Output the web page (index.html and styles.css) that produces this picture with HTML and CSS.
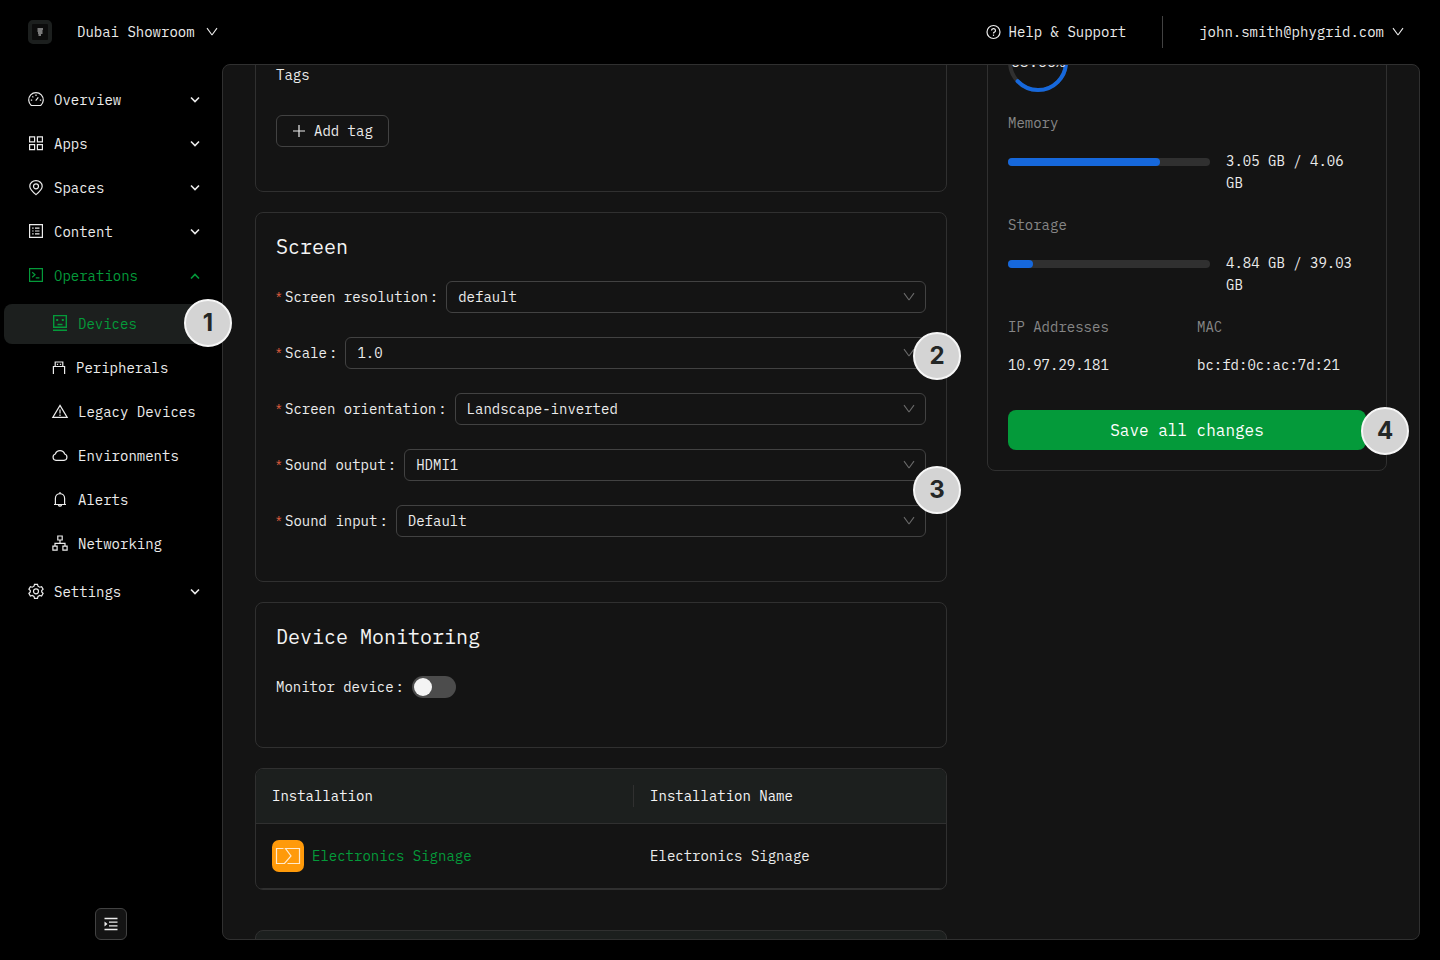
FILE: index.html
```html
<!DOCTYPE html>
<html lang="en">
<head>
  <meta charset="UTF-8" />
  <meta name="viewport" content="width=device-width, initial-scale=1.0"/>
  <title>Devices</title>
  <link rel="stylesheet" href="styles.css">
</head>
<body>
  <svg class="defs" aria-hidden="true">
    <symbol id="down" viewBox="0 0 12 12"><path d="M1 2.2 6 9 11 2.2" fill="none" stroke="currentColor" stroke-width="1.1" stroke-linejoin="bevel"/></symbol>
    <symbol id="caret" viewBox="0 0 12 12"><path d="M2 3.5 6 7.5 10 3.5" fill="none" stroke="currentColor" stroke-width="1.6"/></symbol>
  </svg>

  <header class="topbar">
    <span class="logo">
      <svg width="16" height="16" viewBox="0 0 16 16"><path d="M5.500 5h5.500M5.500 7h5M6 9h4.500M6.500 11h2.500" stroke="#e8e8e8" stroke-width="1.100"/></svg>
    </span>
    <button class="link-button tenant">Dubai Showroom <svg class="down"><use href="#down"/></svg></button>
    <a class="help" href="#">
      <svg width="16" height="16" viewBox="0 0 16 16" fill="none" stroke="currentColor" stroke-width="1.2"><circle cx="8.500" cy="8" r="6.500"/><path d="M6.500 6.600a2 1.900 0 1 1 2.600 1.800q-.6.3-.6 1v.2"/><path d="M8.500 10.600v1.300"/></svg>
      Help &amp; Support
    </a>
    <span class="divider"></span>
    <button class="link-button user">john.smith@phygrid.com <svg class="down"><use href="#down"/></svg></button>
  </header>

  <div class="layout">
    <aside class="sidebar">
      <nav class="menu">
        <a class="item" href="#">
          <svg class="icon" viewBox="0 0 16 16"><path d="M3.300 13.500a7.300 7.300 0 1 1 9.400 0z"/><path d="M7.700 8.700 10.300 5.400M8 2.500v1.400M4.400 4.400l.9.9M2.800 8.100h1.400M11.800 8.100h1.400"/></svg>
          Overview <svg class="caret"><use href="#caret"/></svg>
        </a>
        <a class="item" href="#">
          <svg class="icon" viewBox="0 0 16 16"><path d="M1.600.9h5v5h-5zM9.400.9h5v5h-5zM1.600 8.700h5v5h-5zM9.400 8.700h5v5h-5z"/></svg>
          Apps <svg class="caret"><use href="#caret"/></svg>
        </a>
        <a class="item" href="#">
          <svg class="icon" viewBox="0 0 16 16"><path d="M8 14.600C4.600 11.800 1.800 9.300 1.800 6.200a6.200 5.600 0 0 1 12.400 0c0 3.100-2.800 5.600-6.200 8.400z"/><circle cx="8" cy="6.300" r="2.500"/></svg>
          Spaces <svg class="caret"><use href="#caret"/></svg>
        </a>
        <a class="item" href="#">
          <svg class="icon" viewBox="0 0 16 16"><path d="M1.600.6h12.800v12.800H1.600zM4.200 4.200h1.400M4.200 7h1.400M4.200 9.800h1.400M7 4.200h4.500M7 7h4.500M7 9.800h4.500"/></svg>
          Content <svg class="caret"><use href="#caret"/></svg>
        </a>
        <a class="item active" href="#">
          <svg class="icon" viewBox="0 0 16 16"><path d="M1.600.6h12.800v12.800H1.600zM4.200 4.200 7 6.700 4.200 9.200M7.800 9.800h3.600"/></svg>
          Operations <svg class="caret open"><use href="#caret"/></svg>
        </a>
        <div class="submenu">
          <a class="item selected" href="#">
            <svg class="icon" viewBox="0 0 16 16"><path d="M1.700-.4h12.600v11.600H1.700zM1 14.300h14M5.500 8.500h5" stroke-width="1.400"/><path d="M4.200 4h2M9.800 4h2" stroke-width="2"/></svg>
            Devices
            <span class="marker marker-devices">1</span>
          </a>
          <a class="item" href="#">
            <svg class="icon narrow" viewBox="0 0 14 16"><path d="M3.200 6V2h7.600v4M1.400 14V6.500h11.200V14M5.500 3.800v1.200M8.500 3.800v1.200"/></svg>
            Peripherals
          </a>
          <a class="item" href="#">
            <svg class="icon" viewBox="0 0 16 16"><path d="M8 1.400 15.200 13.400H.8zM8 5.500v4M8 10.600v1.400"/></svg>
            Legacy Devices
          </a>
          <a class="item" href="#">
            <svg class="icon" viewBox="0 0 16 16"><path d="M4 12.400a3.300 3.300 0 0 1-.7-6.400 5 5 0 0 1 9.400 0 3.300 3.300 0 0 1-.7 6.400z"/></svg>
            Environments
          </a>
          <a class="item" href="#">
            <svg class="icon" viewBox="0 0 16 16"><path d="M2 12.500h12M3.400 12.500V6.300a4.600 4.600 0 0 1 9.200 0v6.200M8 0v1.700M6.400 13a1.700 1.700 0 0 0 3.200 0"/></svg>
            Alerts
          </a>
          <a class="item" href="#">
            <svg class="icon" viewBox="0 0 16 16"><path d="M5.800 0h4.400v4H5.800zM.9 10.200h4.200v4H.9zM10.900 10.200h4.200v4h-4.200zM8 4v3.300M3 10.200V7.300h10v2.900"/></svg>
            Networking
          </a>
        </div>
        <a class="item" href="#">
          <svg class="icon" viewBox="0 0 16 16"><path d="M6.500.300h3l.5 1.900 1.700 1 1.900-.6 1.500 2.600-1.400 1.400v1.400l1.400 1.400-1.500 2.600-1.900-.6-1.700 1-.5 1.900h-3L6 12.400l-1.700-1-1.900.6L.9 9.400l1.400-1.400V6.600L.9 5.200l1.500-2.600 1.900.6 1.700-1z"/><circle cx="8" cy="7.300" r="2.500"/></svg>
          Settings <svg class="caret"><use href="#caret"/></svg>
        </a>
      </nav>
      <button class="collapse" aria-label="Toggle menu">
        <svg width="14" height="14" viewBox="0 0 14 14"><path d="M.5 1.500h13M5 5.200h8.500M5 8.800h8.500M.5 12.500h13" stroke="currentColor" stroke-width="1.300"/><path d="M.5 4.500 3.500 7l-3 2.500z" fill="currentColor"/></svg>
      </button>
    </aside>

    <main class="panel">
      <div class="details">
        <section class="card">
          <div class="field-label">Tags</div>
          <button class="add-tag">
            <svg width="14" height="14" viewBox="0 0 14 14"><path d="M7 1v12M1 7h12" stroke="currentColor" stroke-width="1.2"/></svg>
            Add tag
          </button>
        </section>

        <section class="card">
          <h2>Screen</h2>
          <div class="row">
            <label class="required" for="resolution">Screen resolution</label>
            <div class="select"><select id="resolution"><option>default</option></select><svg class="down"><use href="#down"/></svg></div>
          </div>
          <div class="row">
            <label class="required" for="scale">Scale</label>
            <div class="select"><select id="scale"><option>1.0</option></select><svg class="down"><use href="#down"/></svg></div>
            <span class="marker marker-scale">2</span>
          </div>
          <div class="row">
            <label class="required" for="orientation">Screen orientation</label>
            <div class="select"><select id="orientation"><option>Landscape-inverted</option></select><svg class="down"><use href="#down"/></svg></div>
          </div>
          <div class="row">
            <label class="required" for="output">Sound output</label>
            <div class="select"><select id="output"><option>HDMI1</option></select><svg class="down"><use href="#down"/></svg></div>
            <span class="marker marker-sound">3</span>
          </div>
          <div class="row">
            <label class="required" for="input">Sound input</label>
            <div class="select"><select id="input"><option>Default</option></select><svg class="down"><use href="#down"/></svg></div>
          </div>
        </section>

        <section class="card">
          <h2>Device Monitoring</h2>
          <div class="row">
            <label for="monitor">Monitor device</label>
            <input class="switch" type="checkbox" id="monitor">
          </div>
        </section>

        <div class="card table-card">
          <table>
            <thead>
              <tr><th><span>Installation</span></th><th>Installation Name</th></tr>
            </thead>
            <tbody>
              <tr>
                <td>
                  <a class="app" href="#">
                    <svg width="32" height="32" viewBox="0 0 32 32"><rect width="32" height="32" rx="7" fill="#ff9a0a"/><path d="M11.500 8.500h-7v15h8L19 16l-5.500-7.500h14v15H15.500" fill="none" stroke="#ffe9cc" stroke-width="1.200"/></svg>
                    Electronics Signage
                  </a>
                </td>
                <td>Electronics Signage</td>
              </tr>
            </tbody>
          </table>
        </div>

        <div class="card next-card"></div>
      </div>

      <aside class="card status">
        <div class="ring">
          <svg width="60" height="60" viewBox="0 0 60 60" fill="none" stroke-width="4"><circle cx="30" cy="30" r="28" stroke="#303030"/><circle cx="30" cy="30" r="28" stroke="#1668dc" stroke-linecap="round" pathLength="100" stroke-dasharray="63 100" transform="rotate(-90 30 30)"/></svg>
          <span>63.66%</span>
        </div>
        <div class="stat">
          <div class="stat-label">Memory</div>
          <div class="usage"><div class="bar"><div class="fill" style="width: 75%"></div></div><span>3.05 GB / 4.06 GB</span></div>
        </div>
        <div class="stat">
          <div class="stat-label">Storage</div>
          <div class="usage"><div class="bar"><div class="fill" style="width: 12.4%"></div></div><span>4.84 GB / 39.03 GB</span></div>
        </div>
        <div class="addresses">
          <div><div class="stat-label">IP Addresses</div>10.97.29.181</div>
          <div><div class="stat-label">MAC</div>bc:fd:0c:ac:7d:21</div>
        </div>
        <div class="save-wrap">
          <button class="save">Save all changes</button>
          <span class="marker marker-save">4</span>
        </div>
      </aside>
    </main>
  </div>
</body>
</html>
```

FILE: styles.css
```css
* {
  box-sizing: border-box;
}
body {
  margin: 0;
  height: 100vh;
  display: flex;
  flex-direction: column;
  overflow: hidden;
  background: #000;
  color: #ececec;
  font-family: "IBM Plex Mono", "Liberation Mono", monospace;
  font-size: 14px;
  line-height: 22px;
}
button, select {
  font: inherit;
  color: inherit;
}
button {
  cursor: pointer;
}
a {
  color: inherit;
  text-decoration: none;
}
.defs {
  display: none;
}
.down, .caret {
  width: 12px;
  height: 12px;
  flex: none;
}

/* top bar */
.topbar {
  height: 64px;
  flex: none;
  display: flex;
  align-items: center;
  padding: 0 36px 0 28px;
}
.logo {
  width: 24px;
  height: 24px;
  display: flex;
  align-items: center;
  justify-content: center;
  background: #0c0c0c;
  border: 4px solid #1c1f1e;
  border-radius: 5px;
}
.link-button {
  display: flex;
  align-items: center;
  gap: 8px;
  padding: 0;
  border: none;
  background: none;
}
.tenant {
  gap: 11px;
  margin-left: 25px;
}
.help {
  display: flex;
  align-items: center;
  gap: 8px;
  margin-left: auto;
}
.divider {
  width: 1px;
  height: 32px;
  margin: 0 36px;
  background: #424242;
}

.layout {
  flex: 1;
  min-height: 0;
  display: flex;
  padding: 0 20px 20px 0;
}

/* sidebar */
.sidebar {
  width: 222px;
  flex: none;
  display: flex;
  flex-direction: column;
  justify-content: space-between;
  align-items: center;
}
.menu {
  width: 100%;
  display: flex;
  flex-direction: column;
  gap: 4px;
  padding: 16px 4px 0;
}
.item {
  position: relative;
  height: 40px;
  display: flex;
  align-items: center;
  gap: 10px;
  padding: 0 16px 0 24px;
  border-radius: 8px;
  white-space: nowrap;
}
.icon {
  width: 16px;
  height: 16px;
  flex: none;
  fill: none;
  stroke: currentColor;
  stroke-width: 1.2;
  overflow: visible;
}
.icon.narrow {
  width: 14px;
}
.caret {
  margin-left: auto;
  margin-right: 1px;
}
.caret.open {
  transform: rotate(180deg);
}
.submenu {
  display: flex;
  flex-direction: column;
  gap: 4px;
  padding: 4px 0;
}
.submenu .item {
  padding-left: 48px;
}
.active, .selected {
  color: #049a3a;
}
.selected {
  background: #1c1f1e;
}
.collapse {
  width: 32px;
  height: 32px;
  display: flex;
  align-items: center;
  justify-content: center;
  padding: 0;
  background: #141414;
  border: 1px solid #424242;
  border-radius: 6px;
}

/* content */
.panel {
  flex: 1;
  min-width: 0;
  display: grid;
  grid-template-columns: 692fr 400fr;
  gap: 40px;
  align-items: start;
  padding: 0 32px;
  overflow: hidden;
  background: #141414;
  border: 1px solid #303030;
  border-radius: 8px;
}
.details {
  display: flex;
  flex-direction: column;
  gap: 20px;
  margin-top: -27px;
}
.card {
  padding: 20px;
  border: 1px solid #303030;
  border-radius: 8px;
}
h2 {
  margin: 0 0 20px;
  font-size: 20px;
  font-weight: 400;
  line-height: 28px;
  color: #f4f4f4;
}
.field-label {
  line-height: 32px;
  margin-bottom: 24px;
}
.add-tag {
  height: 32px;
  display: flex;
  align-items: center;
  gap: 8px;
  margin-bottom: 24px;
  padding: 0 15px;
  background: #141414;
  border: 1px solid #424242;
  border-radius: 6px;
}
.row {
  position: relative;
  display: flex;
  align-items: center;
  height: 32px;
  margin-bottom: 24px;
}
.row label {
  display: flex;
  align-items: center;
}
.row label::after {
  content: ":";
  margin: 0 8px 0 2px;
}
.required::before {
  content: "*";
  width: 5px;
  margin-right: 4px;
  color: #dc5a3c;
  font-family: "Liberation Sans", sans-serif;
}
.select {
  position: relative;
  flex: 1;
}
.select select {
  display: block;
  width: 100%;
  height: 32px;
  padding: 0 30px 0 11px;
  appearance: none;
  background: #141414;
  border: 1px solid #424242;
  border-radius: 6px;
}
.select .down {
  position: absolute;
  top: 10px;
  right: 11px;
  color: #6a6a6a;
  pointer-events: none;
}
.switch {
  appearance: none;
  width: 44px;
  height: 22px;
  margin: 0;
  padding: 2px;
  background: #4c4c4c;
  border-radius: 11px;
}
.switch::before {
  content: "";
  display: block;
  width: 18px;
  height: 18px;
  border-radius: 50%;
  background: #f4f4f4;
}

/* installations */
.table-card {
  padding: 0;
  overflow: hidden;
}
table {
  width: 100%;
  border-collapse: separate;
  border-spacing: 0;
  table-layout: fixed;
}
th, td {
  padding: 16px;
  text-align: left;
  font-weight: 400;
  border-bottom: 1px solid #303030;
}
th {
  background: #1c1f1e;
  color: #f4f4f4;
}
th:first-child {
  width: 54.8%;
  padding-right: 0;
}
th span {
  display: block;
  border-right: 1px solid #303030;
}
.app {
  display: flex;
  align-items: center;
  gap: 8px;
  color: #049a3a;
}
.next-card {
  height: 60px;
  margin-top: 20px;
  background: #1c1f1e;
}

/* device status */
.status {
  margin-top: -54px;
  display: flex;
  flex-direction: column;
  gap: 20px;
}
.ring {
  position: relative;
  width: 60px;
  height: 60px;
}
.ring span {
  position: absolute;
  inset: 0;
  display: flex;
  align-items: center;
  justify-content: center;
  font-size: 15px;
}
.stat-label {
  margin-bottom: 16px;
  color: #868686;
}
.usage {
  display: flex;
  align-items: flex-start;
  gap: 16px;
}
.usage span {
  flex: 0 0 140px;
}
.bar {
  flex: 1;
  height: 8px;
  margin-top: 8px;
  border-radius: 4px;
  background: #303030;
}
.fill {
  height: 8px;
  border-radius: 4px;
  background: #1668dc;
}
.addresses {
  display: grid;
  grid-template-columns: 1fr 1fr;
  gap: 20px;
}
.save-wrap {
  position: relative;
  margin-top: 14px;
}
.save {
  display: block;
  width: 100%;
  height: 40px;
  border: none;
  border-radius: 8px;
  background: #049a3a;
  color: #fff;
  font-size: 16px;
}

/* numbered markers */
.marker {
  position: absolute;
  z-index: 1;
  width: 48px;
  height: 48px;
  display: flex;
  align-items: center;
  justify-content: center;
  border: 2px solid #f6f6f6;
  border-radius: 50%;
  background: #d4d4d4;
  color: #242726;
  font-family: Inter, sans-serif;
  font-size: 24px;
  font-weight: 700;
}
.marker-devices {
  top: -5px;
  right: -14px;
}
.marker-scale {
  top: -5px;
  right: -35px;
}
.marker-sound {
  top: 17px;
  right: -35px;
}
.marker-save {
  top: -3px;
  right: -43px;
}
```
